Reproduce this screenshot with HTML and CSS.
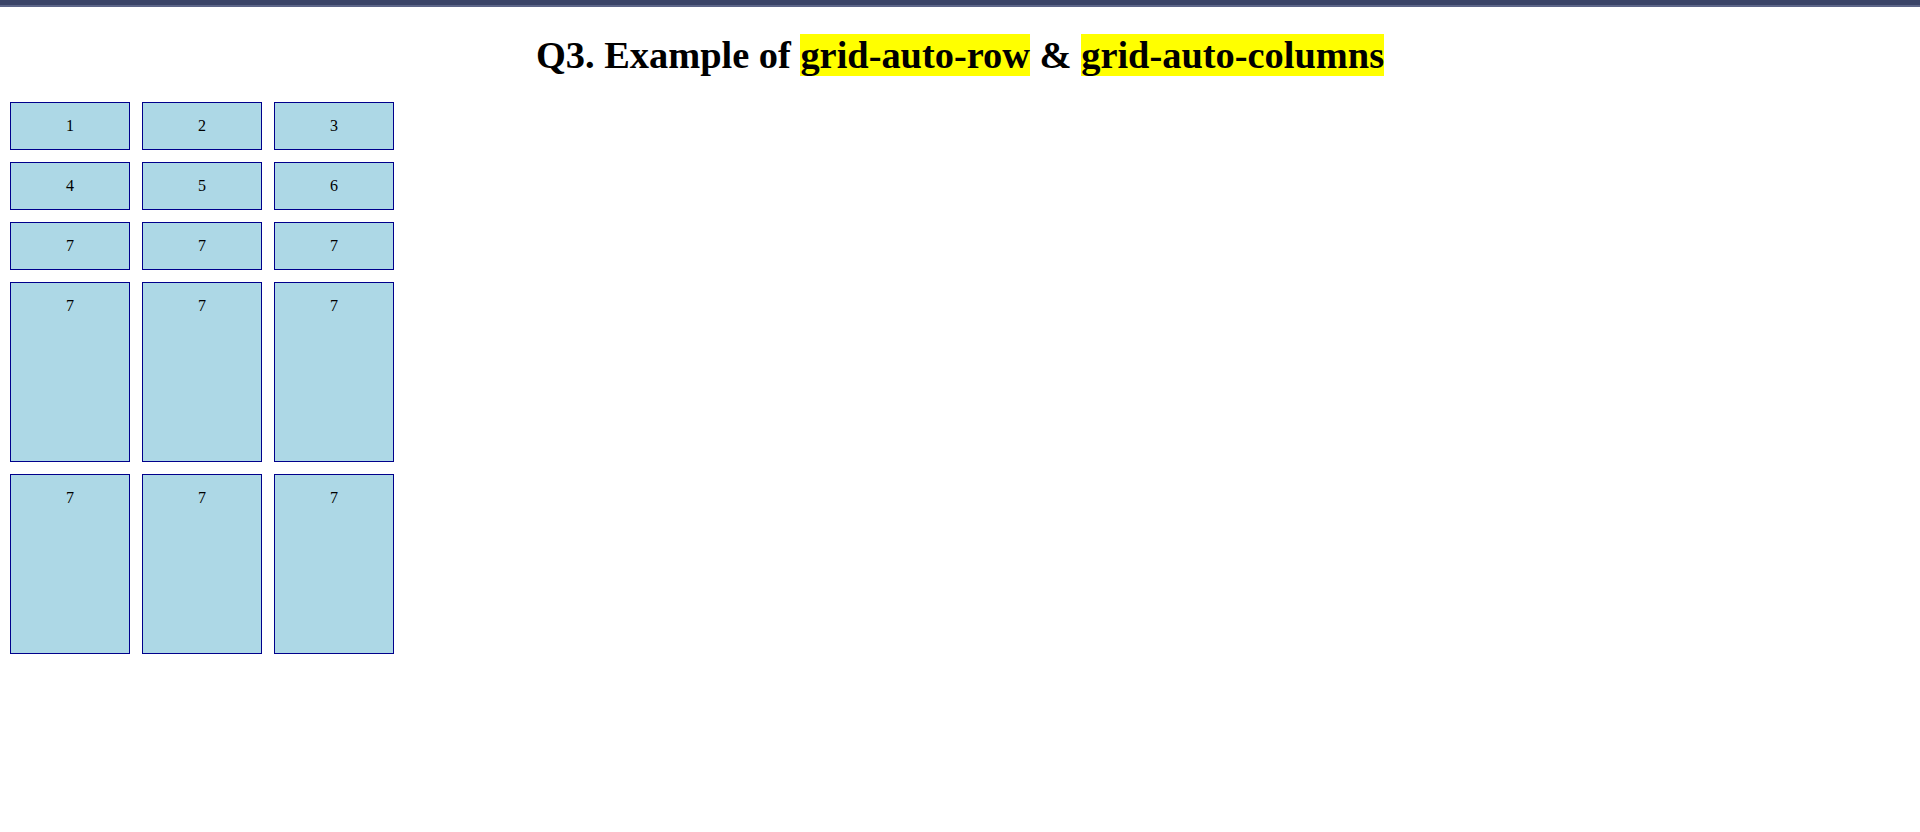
FILE: index.html
```html
<!DOCTYPE html>
<html lang="en">
<head>
<meta charset="utf-8">
<title>Grid auto rows</title>
<link rel="stylesheet" href="styles.css">
</head>
<body>
<div class="top-bar"></div>
<h1 class="title">Q3. Example of <span class="mark">grid-auto-row</span> &amp; <span class="mark">grid-auto-columns</span></h1>
<div class="grid">
  <div class="item">1</div>
  <div class="item">2</div>
  <div class="item">3</div>
  <div class="item">4</div>
  <div class="item">5</div>
  <div class="item">6</div>
  <div class="item">7</div>
  <div class="item">7</div>
  <div class="item">7</div>
  <div class="item">7</div>
  <div class="item">7</div>
  <div class="item">7</div>
  <div class="item">7</div>
  <div class="item">7</div>
  <div class="item">7</div>
</div>
</body>
</html>
```
FILE: styles.css
```css
html, body {
  margin: 0;
  padding: 0;
  background: #ffffff;
}
body {
  font-family: "Liberation Serif", "Times New Roman", serif;
  color: #000;
}
.top-bar {
  height: 5px;
  background: #3a4467;
  border-bottom: 2px solid #5d6689;
}
.title {
  font-size: 38.4px;
  font-weight: bold;
  text-align: center;
  margin: 26px 8px 25px;
  line-height: normal;
}
.mark {
  background: #ffff00;
}
.grid {
  display: grid;
  grid-template-columns: repeat(3, 120px);
  grid-template-rows: repeat(3, 48px);
  grid-auto-rows: 180px;
  gap: 12px;
  margin: 0 10px 8px;
}
.item {
  box-sizing: border-box;
  background: #add8e6;
  border: 1px solid #00008b;
  padding-top: 14px;
  font-size: 16px;
  text-align: center;
}
```
